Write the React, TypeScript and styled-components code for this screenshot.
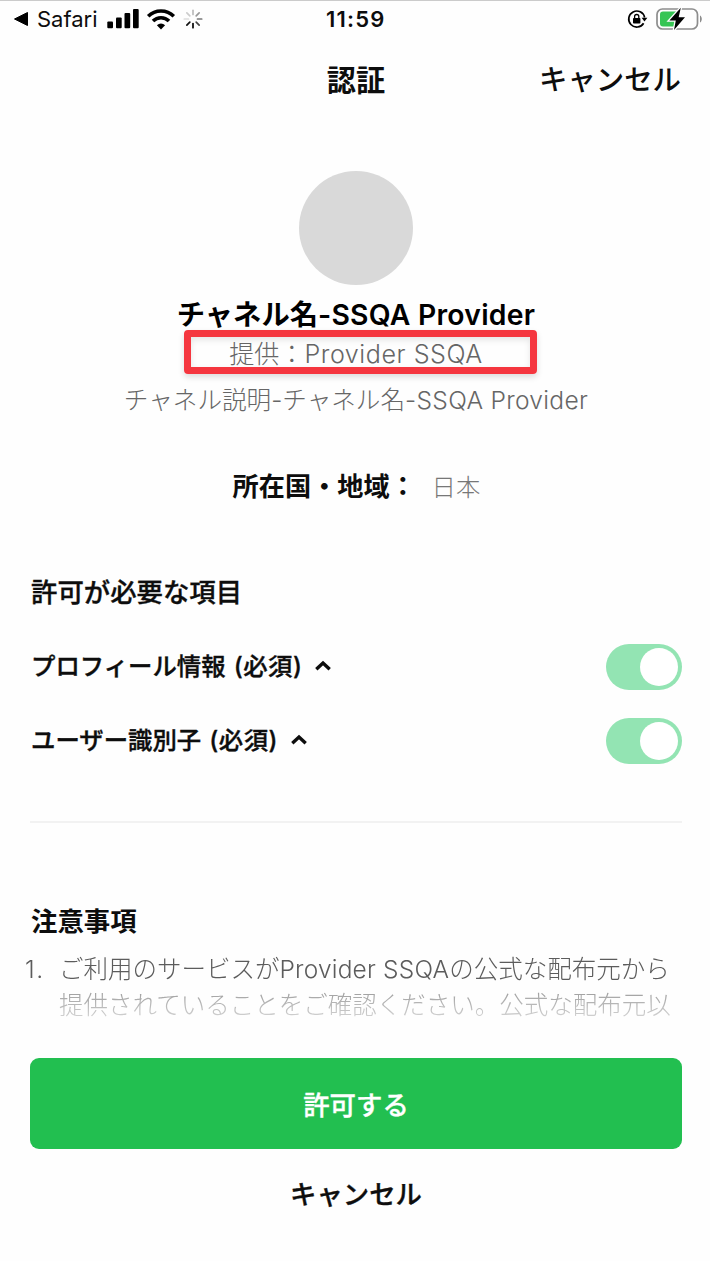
import React from "react";
import styled, { createGlobalStyle } from "styled-components";

const GlobalStyle = createGlobalStyle`
  * { box-sizing: border-box; }
  body { margin: 0; background: #fefefe; }
`;

const Screen = styled.div`
  display: flex;
  flex-direction: column;
  width: 710px;
  height: 1261px;
  overflow: hidden;
  border-top: 1px solid #cbcbcb;
  background: #fefefe;
  color: #0d0d0d;
  font-family: Inter, "Noto Sans CJK JP", sans-serif;
  white-space: nowrap;
`;

const StatusBar = styled.div`
  display: grid;
  grid-template-columns: 326px 1fr auto;
  align-items: center;
  height: 36px;
  padding-right: 7px;
`;

const StatusLeft = styled.div`
  display: flex;
  align-items: center;
  padding-left: 13px;
`;

const BackApp = styled.span`
  width: 70px;
  padding-left: 8px;
  font-size: 22px;
  line-height: 36px;
`;

const Clock = styled.span`
  font-size: 22px;
  font-weight: 600;
  line-height: 36px;
  letter-spacing: 1.2px;
`;

const StatusRight = styled.div`
  display: flex;
  align-items: center;
  gap: 8px;
`;

const Header = styled.header`
  display: grid;
  grid-template-columns: 1fr auto 1fr;
  align-items: center;
  height: 84px;
  padding: 3px 28px 0 30px;
`;

const HeaderTitle = styled.h1`
  grid-column: 2;
  margin: 0;
  font-size: 29.2px;
  font-weight: 700;
  line-height: 40px;
`;

const TextButton = styled.button<{ $size: number }>`
  justify-self: end;
  padding: 0;
  border: 0;
  background: none;
  color: inherit;
  font-family: inherit;
  font-size: ${(p) => p.$size}px;
  font-weight: 500;
  line-height: 40px;
`;

const HeaderCancel = styled(TextButton)`
  margin: -1px 1px 0 0;
`;

const FooterCancel = styled(TextButton)`
  -webkit-text-stroke: 0.35px currentColor;
`;

const Profile = styled.section`
  display: flex;
  flex-direction: column;
  align-items: center;
  padding: 50px 28px 0 30px;
`;

const Avatar = styled.div`
  width: 114px;
  height: 114px;
  border-radius: 50%;
  background: #d9d9d9;
`;

const ChannelName = styled.h2`
  margin: 10px 0 0;
  color: #000;
  font-size: 28.3px;
  font-weight: 600;
  line-height: 40px;
`;

const Provider = styled.p`
  position: relative;
  margin: -1px 0 0;
  color: #666;
  font-size: 25.1px;
  font-weight: 300;
  line-height: 40px;
`;

const Highlight = styled.span`
  position: absolute;
  top: -4px;
  left: calc(50% - 172px);
  width: 353px;
  height: 44px;
  border: 7px solid #f5363f;
  border-radius: 4px;
  box-shadow: 0 3px 6px rgba(0, 0, 0, 0.14), inset 0 3px 6px rgba(0, 0, 0, 0.1);
`;

const Description = styled.p`
  margin: 6px 0 0;
  color: #666;
  font-size: 24.6px;
  font-weight: 300;
  line-height: 40px;
`;

const Latin = styled.span<{ $spacing: number }>`
  letter-spacing: ${(p) => p.$spacing}px;
`;

const Region = styled.dl`
  display: flex;
  align-items: center;
  margin: 47px 0 0;
  line-height: 40px;
`;

const RegionLabel = styled.dt`
  width: 200px;
  padding-left: 1px;
  font-size: 26.2px;
  font-weight: 700;
`;

const RegionValue = styled.dd`
  margin: 0;
  color: #777;
  font-size: 24.4px;
  font-weight: 300;
`;

const Permissions = styled.section`
  margin: 65px 28px 0 30px;
  height: 251px;
  border-bottom: 2px solid #f2f2f2;
`;

const SectionTitle = styled.h3<{ $strong?: boolean }>`
  margin: 0;
  padding-left: 1px;
  font-size: 26.4px;
  font-weight: ${(p) => (p.$strong ? 700 : 500)};
  line-height: 40px;
  -webkit-text-stroke: ${(p) => (p.$strong ? "0" : "0.35px currentColor")};
`;

const PermissionRow = styled.div`
  display: flex;
  align-items: center;
  justify-content: space-between;
  height: 74px;
`;

const PermissionList = styled.div`
  padding-top: 18px;
`;

const PermissionLabel = styled.div`
  display: flex;
  align-items: center;
  gap: 13px;
  padding: 0 0 2px 1px;
  font-size: 24.4px;
  font-weight: 500;
  line-height: 40px;
  word-spacing: 1.5px;
  -webkit-text-stroke: 0.35px currentColor;
`;

const Toggle = styled.span`
  display: flex;
  justify-content: flex-end;
  width: 76px;
  height: 46px;
  padding: 4px;
  border-radius: 23px;
  background: #93e4b3;
`;

const Knob = styled.span`
  width: 38px;
  height: 38px;
  border-radius: 50%;
  background: #fff;
`;

const Notes = styled.section`
  height: 157px;
  margin-top: 78px;
  padding-left: 30px;
  overflow: hidden;
`;

const NoteList = styled.ol`
  display: grid;
  grid-template-columns: 35px 1fr;
  height: 72px;
  margin: 10px 0 0 -6px;
  padding: 0;
  list-style: none;
  color: #5c5c5c;
  font-size: 24.5px;
  font-weight: 300;
  line-height: 36px;
  mask-image: linear-gradient(#000 34px, rgba(0, 0, 0, 0.6) 40px, rgba(0, 0, 0, 0.25) 68px, transparent 72px);
`;

const NoteNumber = styled.span`
  padding-left: 1px;
  letter-spacing: 1.5px;
`;

const NoteText = styled.li`
  display: block;
`;

const NoteLine = styled.span`
  display: block;
`;

const Actions = styled.footer`
  display: flex;
  flex-direction: column;
  align-items: center;
  gap: 25px;
  padding: 0 28px 0 30px;
`;

const AllowButton = styled.button`
  width: 100%;
  height: 91px;
  padding: 0;
  border: 0;
  border-radius: 9px;
  background: #22bf50;
  color: #fff;
  font-family: inherit;
  font-size: 26.4px;
  font-weight: 500;
  -webkit-text-stroke: 0.35px currentColor;
`;

const Icon = styled.svg<{ $ml?: number }>`
  display: block;
  flex: none;
  margin-left: ${(p) => p.$ml ?? 0}px;
`;

const spokes = ["#bbb", "#999", "#777", "#444", "#000", "#111", "#ddd", "#ccc"];

const BackIcon = () => (
  <Icon width="16" height="16" viewBox="0 0 16 16">
    <path d="M1.5 8 14.5 1.5v13z" fill="#000" stroke="#000" strokeWidth="1" strokeLinejoin="round" />
  </Icon>
);

const SignalIcon = () => (
  <Icon $ml={7} width="34" height="22" viewBox="0 0 34 22">
    <rect x="1.3" y="13.5" width="5.7" height="6.7" rx="1" />
    <rect x="10" y="9.5" width="5.7" height="10.7" rx="1" />
    <rect x="18.5" y="5" width="5.7" height="15.2" rx="1" />
    <rect x="27" y="1" width="5.7" height="19.2" rx="1" />
  </Icon>
);

const WifiIcon = () => (
  <Icon $ml={6} width="30" height="22" viewBox="0 0 30 22">
    <g fill="none" stroke="#000" strokeWidth="3.6">
      <path d="M2.2 8.2a18.3 18.3 0 0 1 25.6 0" />
      <path d="M7 13a11.4 11.4 0 0 1 16 0" />
    </g>
    <path d="M15 21.5l-4.1-4.3a6 6 0 0 1 8.2 0z" />
  </Icon>
);

const SpinnerIcon = () => (
  <Icon $ml={7} width="20" height="20" viewBox="-10 -10 20 20">
    {spokes.map((color, i) => (
      <line key={i} x1="0" y1="-4.5" x2="0" y2="-8.7" stroke={color} strokeWidth="1.7" strokeLinecap="round" transform={`rotate(${i * 45})`} />
    ))}
  </Icon>
);

const RotationLockIcon = () => (
  <Icon width="21" height="20" viewBox="0 0 21 20">
    <path d="M16.6 14.2A8 8 0 1 1 17.6 8.5" fill="none" stroke="#000" strokeWidth="1.7" />
    <path d="M14.6 8.7h5.8l-2.9 3.9z" />
    <rect x="6" y="9" width="7.4" height="5.6" rx="0.8" />
    <path d="M7.6 9.5V7.6a2.1 2.1 0 0 1 4.2 0v1.9" fill="none" stroke="#000" strokeWidth="1.3" />
  </Icon>
);

const BatteryIcon = () => (
  <Icon width="47" height="24" viewBox="0 0 47 24">
    <rect x="1" y="2" width="40.5" height="20" rx="5.5" fill="none" stroke="#8d8d8d" strokeWidth="1.7" />
    <path d="M44 8.5v7c2.4-1.2 2.4-5.8 0-7z" fill="#8d8d8d" />
    <path d="M7 4.5h13v15H7a3 3 0 0 1-3-3v-9a3 3 0 0 1 3-3z" fill="#36c554" />
    <path d="M24.8.8 13.4 13.4h6.4L18 23 29 10.2h-6.3z" fill="#000" stroke="#fefefe" strokeWidth="2.6" paintOrder="stroke" />
  </Icon>
);

const ChevronUp = () => (
  <Icon width="16" height="12" viewBox="0 0 16 12">
    <path d="M1.3 9.3 8 3 14.7 9.3" fill="none" stroke="#0d0d0d" strokeWidth="3.4" />
  </Icon>
);

const permissions = ["プロフィール情報", "ユーザー識別子"];

export default function App() {
  return (
    <Screen>
      <GlobalStyle />
      <StatusBar>
        <StatusLeft>
          <BackIcon />
          <BackApp>Safari</BackApp>
          <SignalIcon />
          <WifiIcon />
          <SpinnerIcon />
        </StatusLeft>
        <Clock>11:59</Clock>
        <StatusRight>
          <RotationLockIcon />
          <BatteryIcon />
        </StatusRight>
      </StatusBar>
      <Header>
        <HeaderTitle>認証</HeaderTitle>
        <HeaderCancel $size={28.4}>キャンセル</HeaderCancel>
      </Header>
      <Profile>
        <Avatar />
        <ChannelName>チャネル名<Latin $spacing={0.25}>-SSQA Provider</Latin></ChannelName>
        <Provider>
          提供：<Latin $spacing={0.55}>Provider SSQA</Latin>
          <Highlight />
        </Provider>
        <Description>チャネル説明-チャネル名<Latin $spacing={0.3}>-SSQA Provider</Latin></Description>
        <Region>
          <RegionLabel>所在国・地域：</RegionLabel>
          <RegionValue>日本</RegionValue>
        </Region>
      </Profile>
      <Permissions>
        <SectionTitle>許可が必要な項目</SectionTitle>
        <PermissionList>
          {permissions.map((label) => (
            <PermissionRow key={label}>
              <PermissionLabel>
                <span>
                  {label} <Latin $spacing={0.5}>(必須)</Latin>
                </span>
                <ChevronUp />
              </PermissionLabel>
              <Toggle role="switch" aria-checked="true">
                <Knob />
              </Toggle>
            </PermissionRow>
          ))}
        </PermissionList>
      </Permissions>
      <Notes>
        <SectionTitle $strong>注意事項</SectionTitle>
        <NoteList>
          <NoteNumber>1.</NoteNumber>
          <NoteText>
            <NoteLine>ご利用のサービスが<Latin $spacing={0.2}>Provider SSQA</Latin>の公式な配布元から</NoteLine>
            <NoteLine>提供されていることをご確認ください。公式な配布元以</NoteLine>
          </NoteText>
        </NoteList>
      </Notes>
      <Actions>
        <AllowButton>許可する</AllowButton>
        <FooterCancel $size={26.4}>キャンセル</FooterCancel>
      </Actions>
    </Screen>
  );
}
